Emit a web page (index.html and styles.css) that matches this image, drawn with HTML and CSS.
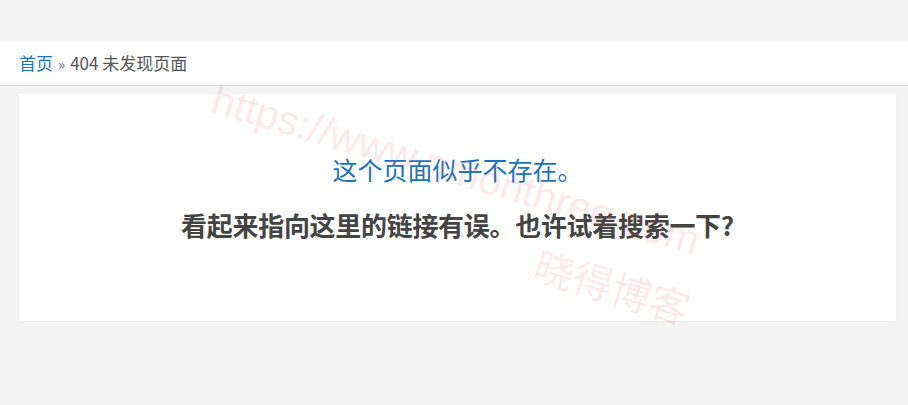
FILE: index.html
```html
<!DOCTYPE html>
<html lang="zh-CN">
<head>
<meta charset="utf-8">
<title>404 未发现页面</title>
<link rel="stylesheet" href="styles.css">
</head>
<body>
<div class="topgap"></div>
<nav class="crumbs">
  <a class="home" href="#">首页</a><span class="sep">»</span><span class="current">404 未发现页面</span>
</nav>
<main class="card">
  <h1 class="title">这个页面似乎不存在。</h1>
  <p class="desc">看起来指向这里的链接有误。也许试着搜索一下?</p>
</main>
<div class="wm wm-url">https://www.nmonthree.com</div>
<div class="wm wm-name">晓得博客</div>
</body>
</html>
```
FILE: styles.css
```css
html, body {
  margin: 0;
  padding: 0;
}
body {
  background: #f4f4f4;
  font-family: "Noto Sans CJK SC", "Liberation Sans", sans-serif;
  color: #555;
  width: 908px;
  height: 405px;
  overflow: hidden;
  position: relative;
}
.topgap {
  height: 41px;
}
.crumbs {
  background: #fff;
  height: 44px;
  line-height: 43px;
  padding-left: 19px;
  border-bottom: 1px solid #dcdcdc;
  font-size: 17px;
  color: #555;
}
.crumbs .home {
  color: #1e73be;
  text-decoration: none;
}
.crumbs .sep {
  color: #777;
  margin: 0 5px;
  font-size: 15px;
}
.card {
  background: #fff;
  margin: 8px 12px 0 19px;
  height: 227px;
  box-sizing: border-box;
  padding-top: 58px;
  text-align: center;
  box-shadow: 0 1px 2px rgba(0,0,0,0.04);
}
.title {
  margin: 0;
  font-size: 25px;
  line-height: 34px;
  font-weight: normal;
  color: #1e73be;
}
.desc {
  margin: 22px 0 0;
  font-size: 26px;
  line-height: 34px;
  font-weight: bold;
  color: #444;
  letter-spacing: -0.3px;
}
.wm {
  position: absolute;
  color: rgba(255, 70, 100, 0.13);
  white-space: nowrap;
  pointer-events: none;
  transform-origin: 0 0;
  line-height: 1;
}
.wm-url {
  left: 219px;
  top: 79px;
  font-family: "Liberation Sans", sans-serif;
  font-size: 41px;
  transform: rotate(16.5deg);
}
.wm-name {
  left: 542px;
  top: 243px;
  font-size: 40px;
  transform: rotate(17deg);
}
```
